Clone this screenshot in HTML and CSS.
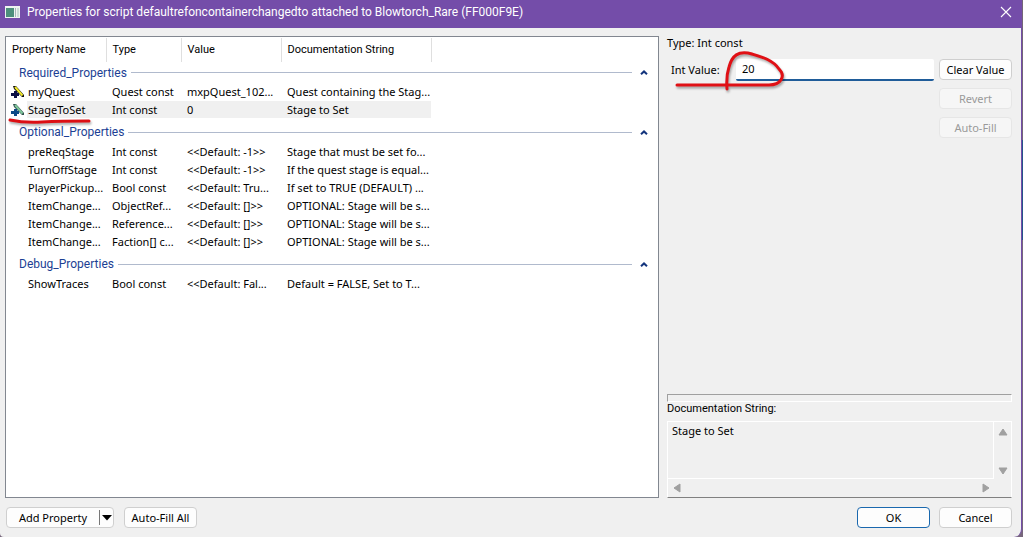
FILE: index.html
```html
<!DOCTYPE html>
<html lang="en">
<head>
<meta charset="utf-8">
<title>Script properties</title>
<link rel="stylesheet" href="styles.css">
</head>
<body>
<div class="desktop">
<main class="window">
  <header class="titlebar">
    <svg class="app-icon" width="16" height="12" viewBox="0 0 16 12" aria-hidden="true">
      <rect x="0" y="0" width="15" height="12" fill="#eef3f1"/>
      <rect x="1" y="2" width="8" height="9" fill="#4d8f7c"/>
      <rect x="10" y="2" width="1" height="9" fill="#a5b5b8"/>
      <rect x="12" y="2" width="2" height="9" fill="#c9dcd5"/>
    </svg>
    <h1 class="title">Properties for script defaultrefoncontainerchangedto attached to Blowtorch_Rare (FF000F9E)</h1>
    <button class="close" aria-label="Close">
      <svg width="12" height="12" viewBox="0 0 12 12"><path d="M1 1l10 10M11 1L1 11" stroke="#fff" stroke-width="1.1" fill="none"/></svg>
    </button>
  </header>

  <div class="content">
    <section class="list">
      <table class="props">
        <colgroup><col class="c-name"><col class="c-type"><col class="c-value"><col class="c-doc"><col></colgroup>
        <thead>
          <tr><th>Property Name</th><th>Type</th><th>Value</th><th>Documentation String</th><td></td></tr>
        </thead>
        <tbody>
          <tr><th class="group first" colspan="5"><div class="group-bar"><span>Required_Properties</span><i class="rule"></i><button class="fold" aria-label="Collapse Required_Properties"><svg width="8" height="5" viewBox="0 0 8 5"><path d="M1 4.2L4 1.4l3 2.8" fill="none" stroke="#13357d" stroke-width="2"/></svg></button></div></th></tr>
          <tr>
            <td class="name"><svg class="pen" width="13" height="13" viewBox="0 0 13 13"><path d="M2 1h3l8 9v2h-2L3 4z" fill="#111"/><path d="M4 2l7.500 8.500" stroke="#f3ea2c" stroke-width="2"/><path d="M3 6h3v2h2v3H6v2H3v-2H0V8h3z" fill="#0b1045"/></svg>myQuest</td>
            <td>Quest const</td><td>mxpQuest_102...</td><td>Quest containing the Stag...</td><td></td>
          </tr>
          <tr class="selected">
            <td class="name"><svg class="pen" width="13" height="13" viewBox="0 0 13 13"><path d="M2 1h3l8 9v2h-2L3 4z" fill="#31514d"/><path d="M4 2l7.500 8.500" stroke="#7fc79b" stroke-width="2"/><path d="M3 6h3v2h2v3H6v2H3v-2H0V8h3z" fill="#0d4a86"/></svg>StageToSet
              <svg class="mark-name" width="90" height="12" viewBox="0 0 90 12" aria-hidden="true"><path d="M4 3Q18 6 36 5T83 4" fill="none" stroke="#dc0f14" stroke-width="3" stroke-linecap="round"/></svg>
            </td>
            <td>Int const</td><td>0</td><td>Stage to Set</td><td></td>
          </tr>
          <tr><th class="group" colspan="5"><div class="group-bar"><span>Optional_Properties</span><i class="rule"></i><button class="fold" aria-label="Collapse Optional_Properties"><svg width="8" height="5" viewBox="0 0 8 5"><path d="M1 4.2L4 1.4l3 2.8" fill="none" stroke="#13357d" stroke-width="2"/></svg></button></div></th></tr>
          <tr><td class="name">preReqStage</td><td>Int const</td><td>&lt;&lt;Default: -1&gt;&gt;</td><td>Stage that must be set fo...</td><td></td></tr>
          <tr><td class="name">TurnOffStage</td><td>Int const</td><td>&lt;&lt;Default: -1&gt;&gt;</td><td>If the quest stage is equal...</td><td></td></tr>
          <tr><td class="name">PlayerPickup...</td><td>Bool const</td><td>&lt;&lt;Default: Tru...</td><td>If set to TRUE (DEFAULT) ...</td><td></td></tr>
          <tr><td class="name">ItemChange...</td><td>ObjectRef...</td><td>&lt;&lt;Default: []&gt;&gt;</td><td>OPTIONAL: Stage will be s...</td><td></td></tr>
          <tr><td class="name">ItemChange...</td><td>Reference...</td><td>&lt;&lt;Default: []&gt;&gt;</td><td>OPTIONAL: Stage will be s...</td><td></td></tr>
          <tr><td class="name">ItemChange...</td><td>Faction[] c...</td><td>&lt;&lt;Default: []&gt;&gt;</td><td>OPTIONAL: Stage will be s...</td><td></td></tr>
          <tr><th class="group" colspan="5"><div class="group-bar"><span>Debug_Properties</span><i class="rule"></i><button class="fold" aria-label="Collapse Debug_Properties"><svg width="8" height="5" viewBox="0 0 8 5"><path d="M1 4.2L4 1.4l3 2.8" fill="none" stroke="#13357d" stroke-width="2"/></svg></button></div></th></tr>
          <tr><td class="name">ShowTraces</td><td>Bool const</td><td>&lt;&lt;Default: Fal...</td><td>Default = FALSE, Set to T...</td><td></td></tr>
        </tbody>
      </table>
    </section>

    <section class="side">
      <p class="type">Type: Int const</p>
      <div class="editor">
        <label class="field-label" for="int-value">Int Value:</label>
        <input class="field" id="int-value" type="text" value="20">
        <div class="actions">
          <button class="btn">Clear Value</button>
          <button class="btn" disabled>Revert</button>
          <button class="btn" disabled>Auto-Fill</button>
        </div>
        <svg class="mark-value" width="120" height="48" viewBox="0 0 120 48" aria-hidden="true"><path d="M6 36H98C110 36 115 27 108 20C102 11 91 8 81 5C67 1 61 7 58 18Q55 27 56 40" fill="none" stroke="#e01015" stroke-width="3" stroke-linecap="round" stroke-linejoin="round"/></svg>
      </div>
      <div class="frame"></div>
      <label class="doc-label" for="doc">Documentation String:</label>
      <div class="doc">
        <textarea class="doc-text" id="doc" readonly>Stage to Set</textarea>
        <div class="vbar">
          <svg width="10" height="8" viewBox="0 0 10 8"><path d="M5 1l4 6H1z" fill="#a0a0a0" stroke="#a0a0a0" stroke-linejoin="round"/></svg>
          <svg width="10" height="8" viewBox="0 0 10 8"><path d="M5 7l4-6H1z" fill="#a0a0a0" stroke="#a0a0a0" stroke-linejoin="round"/></svg>
        </div>
        <div class="hbar">
          <svg width="8" height="10" viewBox="0 0 8 10"><path d="M1 5l6-4v8z" fill="#a0a0a0" stroke="#a0a0a0" stroke-linejoin="round"/></svg>
          <svg width="8" height="10" viewBox="0 0 8 10"><path d="M7 5L1 1v8z" fill="#a0a0a0" stroke="#a0a0a0" stroke-linejoin="round"/></svg>
        </div>
      </div>
    </section>
  </div>

  <footer class="footer">
    <div class="split">
      <button class="split-main">Add Property</button>
      <button class="split-arrow" aria-label="More add options"><svg width="10" height="6" viewBox="0 0 10 6"><path d="M0 0h10L5 5.500z" fill="#000"/></svg></button>
    </div>
    <button class="btn">Auto-Fill All</button>
    <span class="spacer"></span>
    <button class="btn primary">OK</button>
    <button class="btn">Cancel</button>
  </footer>
</main>
</div>
</body>
</html>
```

FILE: styles.css
```css
* { box-sizing: border-box; }
body {
  margin: 0;
  font: 11px/14px "Noto Sans", "Open Sans", sans-serif;
  color: #000;
}
button, input, textarea { font: inherit; color: inherit; margin: 0; }
button { padding: 0; }
svg { display: block; }

.desktop {
  min-height: 100vh;
  display: flex;
  padding-right: 1px;
  background: linear-gradient(#746678 0 140px, #24558a 140px 240px, #77677c 240px);
}
.window {
  flex: 1;
  min-width: 0;
  display: flex;
  flex-direction: column;
  background: #f0f0f0;
  border-right: 1px solid #744da9;
  border-radius: 0 0 8px 4px;
}

.titlebar {
  display: flex;
  align-items: center;
  height: 28px;
  padding: 0 9px 4px 5px;
  background: #744da9;
  color: #fff;
}
.title { flex: 1; margin: 0 0 0 6px; font: 400 12px/16px Roboto, sans-serif; white-space: nowrap; }
.close { border: 0; background: none; }

.content {
  flex: 1;
  display: grid;
  grid-template-columns: minmax(0, 1fr) 345px;
  gap: 8px;
  padding: 8px 9px 9px 5px;
}
.list { background: #fff; border: 1px solid #828790; padding-top: 1px; }

.props { width: 100%; table-layout: fixed; border-collapse: collapse; }
.c-name { width: 100px; }
.c-type { width: 75px; }
.c-value { width: 100px; }
.c-doc { width: 150px; }
.props th, .props td { padding: 0 0 0 6px; text-align: left; font-weight: 400; white-space: nowrap; height: 18px; line-height: 18px; }
.props thead th { height: 24px; border-right: 1px solid #dfdfdf; font-family: Roboto, sans-serif; }
.props td.name { position: relative; padding-left: 22px; }
.pen { position: absolute; left: 5px; top: 2px; }
.selected td { background: linear-gradient(#f0f0f0, #f0f0f0) 0 0 / 100% 17px no-repeat; }
.selected td.name { background-size: calc(100% - 21px) 17px; background-position: right top; }
.selected td:last-child { background: none; }
.props th.group { height: 24px; padding: 2px 10px 0 13px; color: #1c3f94; font: 400 12px/18px Roboto, sans-serif; }
.props th.group.first { height: 21px; padding-top: 0; }
.group-bar { display: flex; align-items: center; }
.rule { flex: 1; height: 1px; margin: 0 8px 0 4px; background: #b0bacd; }
.fold { border: 0; background: none; }
.mark-name, .mark-value { position: absolute; pointer-events: none; filter: drop-shadow(1px 2px 1px #0005); }
.mark-name { left: 0; top: 16px; z-index: 1; }

.side { display: flex; flex-direction: column; }
.type { margin: 0 0 9px; }
.editor { position: relative; display: flex; align-items: flex-start; }
.field-label { width: 69px; padding: 4px 0 0 4px; }
.field {
  flex: 1;
  min-width: 0;
  height: 22px;
  padding: 0 6px 2px;
  border: 0;
  border-bottom: 2px solid #1f5c99;
  border-radius: 2px;
  background: #fff;
  outline: 0;
}
.actions { display: flex; flex-direction: column; gap: 8px; margin-left: 5px; }
.mark-value { left: 4px; top: -10px; }

.btn {
  width: 73px;
  height: 21px;
  background: #fdfdfd;
  border: 1px solid #cfcfcf;
  border-radius: 4px;
}
.btn:disabled { background: #f6f6f6; border-color: #e6e6e6; color: #9a9a9a; }
.btn.primary { border-color: #1a68ae; margin-right: 1px; }

.frame { height: 8px; margin-top: auto; border: 1px solid #fff; border-top-color: #a0a0a0; border-left-color: #a0a0a0; }
.doc-label { margin: 0 0 5px; font-family: Roboto, sans-serif; }
.doc {
  display: grid;
  grid-template: 57px 18px / 1fr 17px;
  border: 1px solid #fff;
  border-bottom: 1px solid #808080;
}
.doc-text { border: 0; border-right: 1px solid #fff; border-bottom: 1px solid #fff; background: #f0f0f0; resize: none; padding: 2px 4px; overflow: hidden; outline: 0; }
.vbar { display: flex; flex-direction: column; justify-content: space-between; align-items: center; padding: 6px 0 4px; }
.hbar { display: flex; justify-content: space-between; align-items: center; padding: 0 4px 0 5px; }

.footer { display: flex; align-items: center; gap: 8px; padding: 0 9px 9px 6px; }
.split { display: flex; align-items: center; height: 21px; margin-right: 2px; background: #fdfdfd; border: 1px solid #cfcfcf; border-radius: 4px; }
.split-main { width: 93px; height: 15px; border: 0; border-right: 1px solid #777; background: none; }
.split-arrow { width: 13px; height: 15px; border: 0; background: none; display: grid; place-items: center; }
.spacer { flex: 1; }
```
